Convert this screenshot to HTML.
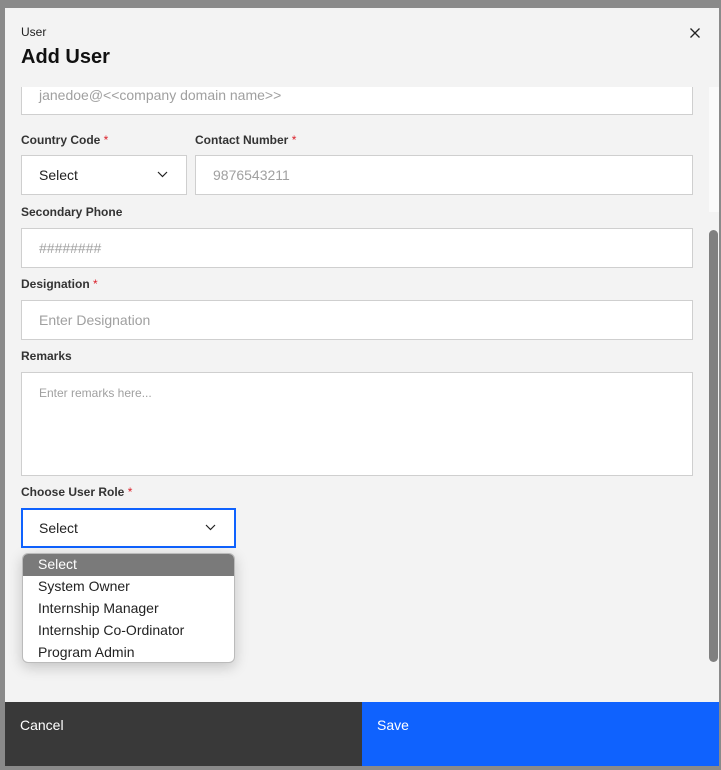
<!DOCTYPE html>
<html><head><style>
*{box-sizing:border-box;margin:0;padding:0}
body{width:721px;height:770px;background:#8a8a8a;font-family:"Liberation Sans",sans-serif;position:relative;overflow:hidden}
.modal{position:absolute;left:5px;top:8px;width:714px;height:758px;background:#f3f3f3}
.abs{position:absolute}
.lbl{position:absolute;left:16px;font-size:12px;font-weight:bold;color:#333}
.lbl span{color:#da1e28;font-weight:normal}
.inp{position:absolute;background:#fff;border:1px solid #cfcfcf;font-size:14px;color:#a0a0a0;padding-left:17px;display:flex;align-items:center}
.chev{position:absolute;right:18px;top:50%;margin-top:-4px}
</style></head><body>
<div class="modal">
<div class="abs" style="left:16px;top:17px;font-size:12px;color:#222">User</div>
<div class="abs" style="left:16px;top:38px;font-size:20px;font-weight:bold;color:#111">Add User</div>
<svg class="abs" style="left:685px;top:20px" width="10" height="10" viewBox="0 0 10 10"><path d="M0.5 0.5l9 9M9.5 0.5l-9 9" stroke="#222" stroke-width="1.3"/></svg>
<div class="abs" style="left:0;top:79px;width:714px;height:615px;overflow:hidden">
 <div class="inp" style="left:16px;top:-12px;width:672px;height:40px">janedoe@&lt;&lt;company domain name&gt;&gt;</div>
 <div class="abs" style="left:704px;top:0;width:10px;height:125px;background:#fafafa"></div>
 <div class="abs" style="left:704px;top:143px;width:9px;height:432px;background:#808080;border-radius:5px"></div>
</div>
<div class="lbl" style="top:125px">Country Code <span>*</span></div>
<div class="lbl" style="top:125px;left:190px">Contact Number <span>*</span></div>
<div class="inp" style="left:16px;top:147px;width:166px;height:40px;color:#222">Select<svg class="chev" width="11" height="7" viewBox="0 0 11 7"><path d="M1 1l4.5 4.5L10 1" fill="none" stroke="#222" stroke-width="1.2"/></svg></div>
<div class="inp" style="left:190px;top:147px;width:498px;height:40px">9876543211</div>
<div class="lbl" style="top:197px">Secondary Phone</div>
<div class="inp" style="left:16px;top:220px;width:672px;height:40px">########</div>
<div class="lbl" style="top:269px">Designation <span>*</span></div>
<div class="inp" style="left:16px;top:292px;width:672px;height:40px">Enter Designation</div>
<div class="lbl" style="top:341px">Remarks</div>
<div class="inp" style="left:16px;top:364px;width:672px;height:104px;align-items:flex-start;padding-top:13px;font-size:12px">Enter remarks here...</div>
<div class="lbl" style="top:477px">Choose User Role <span>*</span></div>
<div class="inp" style="left:16px;top:500px;width:215px;height:40px;border:2px solid #0f62fe;color:#222;padding-left:16px">Select<svg class="chev" width="11" height="7" viewBox="0 0 11 7"><path d="M1 1l4.5 4.5L10 1" fill="none" stroke="#222" stroke-width="1.2"/></svg></div>
<div class="abs" style="left:17px;top:545px;width:213px;height:110px;background:#fff;border:1px solid #bbb;border-radius:6px;overflow:hidden;box-shadow:0 4px 14px rgba(0,0,0,.2);font-size:14px;color:#222">
 <div style="height:22px;background:#7a7a7a;color:#fff;padding-left:15px;line-height:20px">Select</div>
 <div style="height:22px;padding-left:15px;line-height:20px">System Owner</div>
 <div style="height:22px;padding-left:15px;line-height:20px">Internship Manager</div>
 <div style="height:22px;padding-left:15px;line-height:20px">Internship Co-Ordinator</div>
 <div style="height:22px;padding-left:15px;line-height:20px">Program Admin</div>
</div>
<div class="abs" style="left:0;top:694px;width:357px;height:64px;background:#393939;color:#fff;font-size:14px;padding:15px 0 0 15px">Cancel</div>
<div class="abs" style="left:357px;top:694px;width:357px;height:64px;background:#0f62fe;color:#fff;font-size:14px;padding:15px 0 0 15px">Save</div>
</div>
</body></html>
